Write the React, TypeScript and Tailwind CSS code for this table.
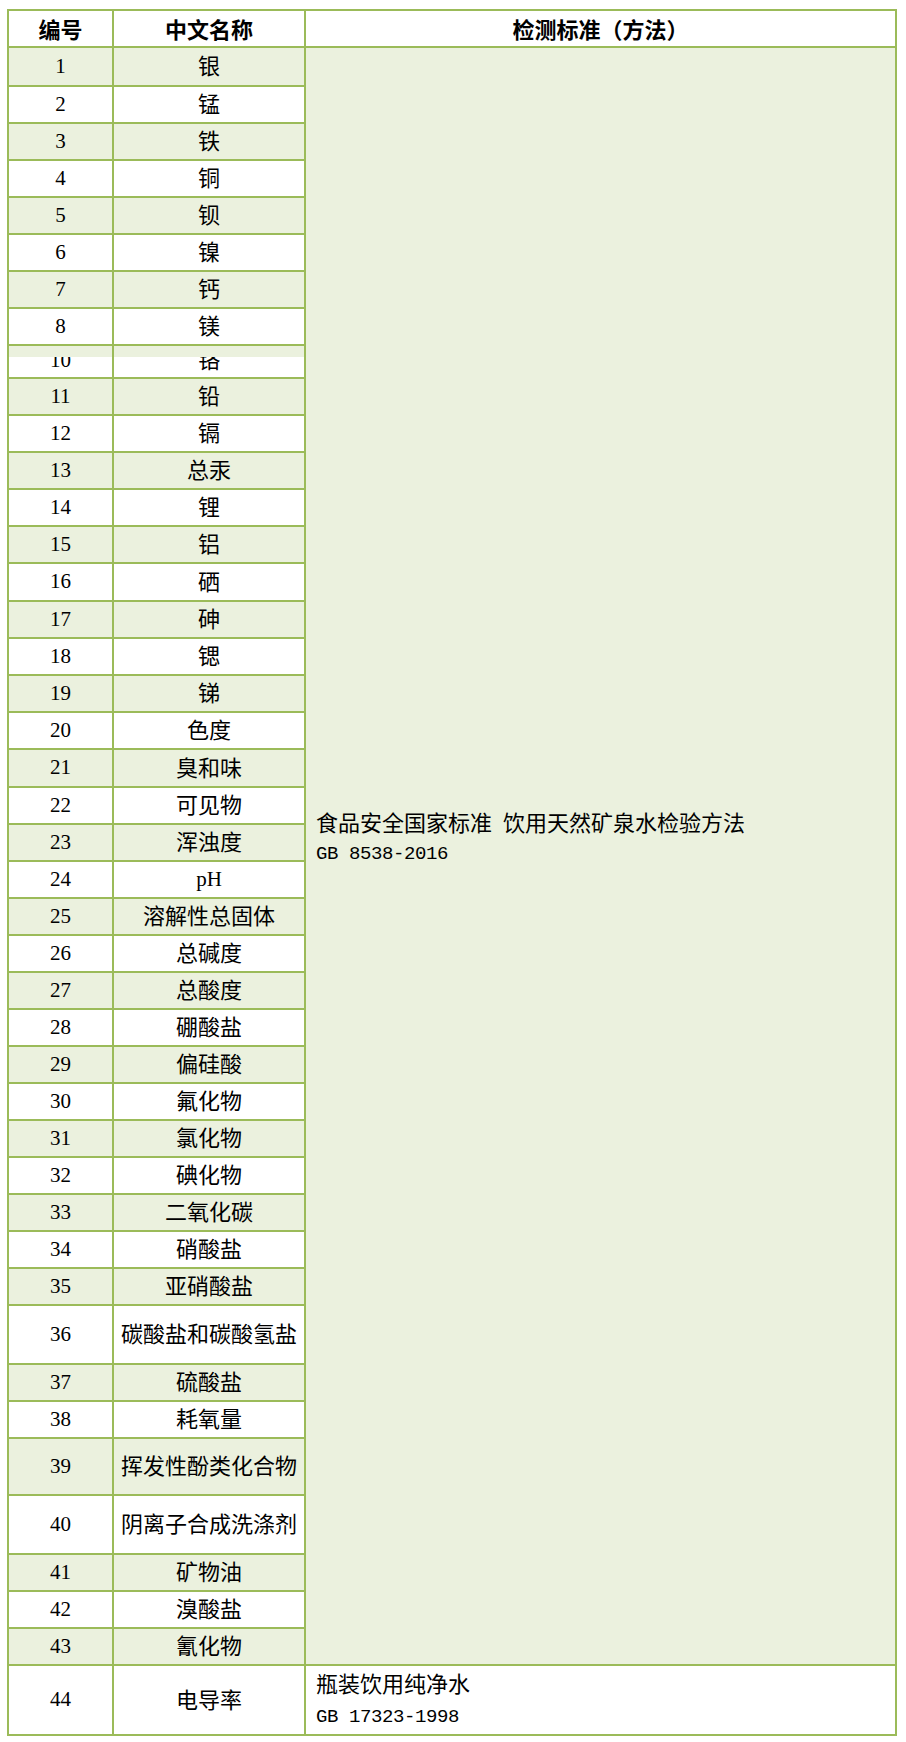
import React from "react";

type Row = { no: string; name: string; h: number };

const rows: Row[] = [
  { no: "1", name: "银", h: 37 },
  { no: "2", name: "锰", h: 35 },
  { no: "3", name: "铁", h: 35 },
  { no: "4", name: "铜", h: 35 },
  { no: "5", name: "钡", h: 35 },
  { no: "6", name: "镍", h: 35 },
  { no: "7", name: "钙", h: 35 },
  { no: "8", name: "镁", h: 35 },
  { no: "10", name: "铬", h: 31 },
  { no: "11", name: "铅", h: 35 },
  { no: "12", name: "镉", h: 35 },
  { no: "13", name: "总汞", h: 35 },
  { no: "14", name: "锂", h: 35 },
  { no: "15", name: "铝", h: 35 },
  { no: "16", name: "硒", h: 36 },
  { no: "17", name: "砷", h: 35 },
  { no: "18", name: "锶", h: 35 },
  { no: "19", name: "锑", h: 35 },
  { no: "20", name: "色度", h: 35 },
  { no: "21", name: "臭和味", h: 36 },
  { no: "22", name: "可见物", h: 35 },
  { no: "23", name: "浑浊度", h: 35 },
  { no: "24", name: "pH", h: 35 },
  { no: "25", name: "溶解性总固体", h: 35 },
  { no: "26", name: "总碱度", h: 35 },
  { no: "27", name: "总酸度", h: 35 },
  { no: "28", name: "硼酸盐", h: 35 },
  { no: "29", name: "偏硅酸", h: 35 },
  { no: "30", name: "氟化物", h: 35 },
  { no: "31", name: "氯化物", h: 35 },
  { no: "32", name: "碘化物", h: 35 },
  { no: "33", name: "二氧化碳", h: 35 },
  { no: "34", name: "硝酸盐", h: 35 },
  { no: "35", name: "亚硝酸盐", h: 35 },
  { no: "36", name: "碳酸盐和碳酸氢盐", h: 57 },
  { no: "37", name: "硫酸盐", h: 35 },
  { no: "38", name: "耗氧量", h: 35 },
  { no: "39", name: "挥发性酚类化合物", h: 55 },
  { no: "40", name: "阴离子合成洗涤剂", h: 57 },
  { no: "41", name: "矿物油", h: 35 },
  { no: "42", name: "溴酸盐", h: 35 },
  { no: "43", name: "氰化物", h: 35 },
];

const heightClass: Record<number, string> = {
  31: "h-[31px]",
  35: "h-[35px]",
  36: "h-[36px]",
  37: "h-[37px]",
  55: "h-[55px]",
  57: "h-[57px]",
};

function BodyRow({ row }: { row: Row }) {
  const n = parseInt(row.no, 10);
  const glitch = row.no === "10";
  const bg = glitch ? "bg-white" : n % 2 === 1 ? "bg-[#ebf1de]" : "bg-white";
  const cell = `relative flex items-center justify-center overflow-hidden ${bg} ${glitch ? "pb-[2px]" : ""}`;
  return (
    <div className={`flex gap-[2px] ${heightClass[row.h]}`}>
      <div className={`w-[103px] text-[21px] ${cell}`}>
        <span>{row.no}</span>
        {glitch && <div className="absolute inset-x-0 top-0 h-[11px] bg-[#ebf1de]" />}
      </div>
      <div className={`w-[190px] text-[22px] ${cell}`}>
        <span className={row.name === "pH" ? "text-[21px]" : ""}>{row.name}</span>
        {glitch && <div className="absolute inset-x-0 top-0 h-[11px] bg-[#ebf1de]" />}
      </div>
    </div>
  );
}

export default function App() {
  return (
    <div className="min-h-[1742px] w-[906px] bg-white pl-[7px] pt-[9px] font-['Liberation_Serif','Noto_Sans_CJK_SC',serif] text-black">
      <div className="flex w-[890px] flex-col gap-[2px] bg-[#9bbb59] p-[2px]">
        <div className="flex h-[35px] gap-[2px] font-['Noto_Sans_CJK_SC',sans-serif] text-[22px] font-bold">
          <div className="flex w-[103px] items-center justify-center bg-white">编号</div>
          <div className="flex w-[190px] items-center justify-center bg-white">中文名称</div>
          <div className="flex w-[589px] items-center justify-center bg-white">检测标准（方法）</div>
        </div>

        <div className="flex gap-[2px]">
          <div className="flex w-[295px] flex-col gap-[2px]">
            {rows.map((r) => (
              <BodyRow key={r.no} row={r} />
            ))}
          </div>
          <div className="flex w-[589px] flex-col justify-center bg-[#ebf1de] pb-[37px] pl-[10px]">
            <div className="font-['Noto_Sans_CJK_SC',sans-serif] text-[22px] leading-[33px]">
              食品安全国家标准<span className="inline-block w-[11px]" />饮用天然矿泉水检验方法
            </div>
            <div className="font-['Liberation_Mono',monospace] text-[19px] leading-[33px] tracking-[-0.4px]">
              GB 8538-2016
            </div>
          </div>
        </div>

        <div className="flex h-[68px] gap-[2px]">
          <div className="flex w-[103px] items-center justify-center bg-white text-[21px]">44</div>
          <div className="flex w-[190px] items-center justify-center bg-white text-[22px]">电导率</div>
          <div className="flex w-[589px] flex-col justify-center bg-white pl-[10px]">
            <div className="font-['Noto_Sans_CJK_SC',sans-serif] text-[22px] leading-[35px]">瓶装饮用纯净水</div>
            <div className="font-['Liberation_Mono',monospace] text-[19px] leading-[35px] tracking-[-0.4px]">
              GB 17323-1998
            </div>
          </div>
        </div>
      </div>
    </div>
  );
}
